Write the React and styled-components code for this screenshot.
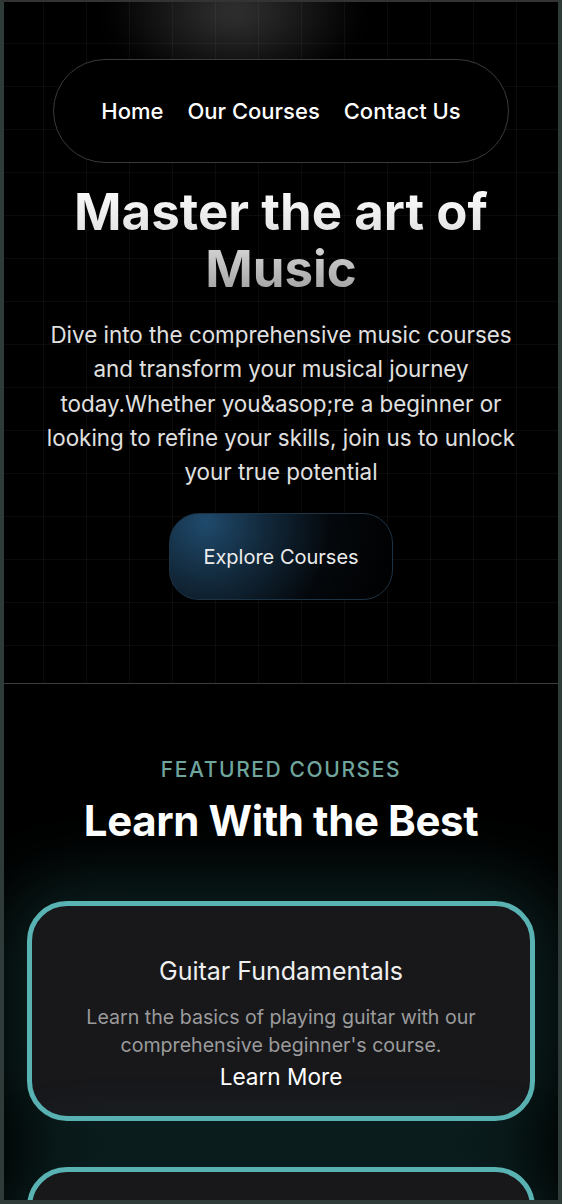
import React from "react";
import styled, { createGlobalStyle } from "styled-components";

const GlobalStyle = createGlobalStyle`
  * { box-sizing: border-box; }
  body {
    margin: 0;
    background: #2f3b38;
    font-family: Inter, "Noto Sans", sans-serif;
  }
`;

const courses = [
  {
    title: "Guitar Fundamentals",
    text: "Learn the basics of playing guitar with our comprehensive beginner's course.",
  },
  {
    title: "Piano for Beginners",
    text: "Start your piano journey with lessons designed for absolute beginners.",
  },
];

export default function App() {
  return (
    <>
      <GlobalStyle />
      <Frame>
        <Page>
          <Hero>
            <Spotlight />
            <Nav>
              <NavLink>Home</NavLink>
              <NavLink>Our Courses</NavLink>
              <NavLink>Contact Us</NavLink>
            </Nav>
            <Title>
              Master the art of
              <br />
              Music
            </Title>
            <Lead>
              Dive into the comprehensive music courses and transform your
              musical journey today.Whether you&amp;asop;re a beginner or
              looking to refine your skills, join us to unlock your true
              potential
            </Lead>
            <ExploreButton>Explore Courses</ExploreButton>
          </Hero>
          <Featured>
            <Eyebrow>FEATURED COURSES</Eyebrow>
            <SectionTitle>Learn With the Best</SectionTitle>
            <CardList>
              {courses.map((c) => (
                <Card key={c.title}>
                  <CardTitle>{c.title}</CardTitle>
                  <CardText>{c.text}</CardText>
                  <LearnMore>Learn More</LearnMore>
                </Card>
              ))}
            </CardList>
          </Featured>
        </Page>
      </Frame>
    </>
  );
}

const Frame = styled.div`
  height: 1204px;
  overflow: hidden;
  border-style: solid;
  border-color: #2f3b38;
  border-width: 2px 4px 4px 4px;
  border-top-color: #333;
`;

const Page = styled.div`
  height: 100%;
  overflow: hidden;
  background: #000;
`;

const Hero = styled.section`
  position: relative;
  display: flex;
  flex-direction: column;
  align-items: center;
  padding: 57px 0 83px;
  border-bottom: 1px solid #3c3c3c;
  background-color: #000;
  background-image: linear-gradient(rgba(255, 255, 255, 0.045) 1px, transparent 1px),
    linear-gradient(90deg, rgba(255, 255, 255, 0.045) 1px, transparent 1px);
  background-size: 43px 43px;
  background-position: -4px -2px;
`;

const Spotlight = styled.div`
  position: absolute;
  top: -70px;
  left: 100px;
  width: 260px;
  height: 160px;
  border-radius: 50%;
  background: radial-gradient(ellipse at center, rgba(255, 255, 255, 0.2), rgba(255, 255, 255, 0) 70%);
  filter: blur(10px);
  pointer-events: none;
`;

const Nav = styled.nav`
  position: relative;
  display: flex;
  justify-content: center;
  align-items: center;
  gap: 24px;
  width: 456px;
  height: 104px;
  border: 1px solid #3a3a3a;
  border-radius: 52px;
  background: #000;
`;

const NavLink = styled.a`
  color: #fff;
  font-size: 22px;
  font-weight: 500;
  cursor: pointer;
`;

const Title = styled.h1`
  margin: 20px 0 0;
  font-size: 51px;
  line-height: 57px;
  font-weight: 700;
  text-align: center;
  background: linear-gradient(180deg, #ffffff 0%, #e2e2e2 45%, #9c9c9c 100%);
  -webkit-background-clip: text;
  background-clip: text;
  color: transparent;
`;

const Lead = styled.p`
  margin: 21px 0 0;
  max-width: 482px;
  color: #e0e0e0;
  font-size: 22.4px;
  line-height: 34.3px;
  text-align: center;
`;

const ExploreButton = styled.button`
  margin-top: 24px;
  width: 224px;
  height: 87px;
  border-radius: 30px;
  border: 1px solid #1c3346;
  background: radial-gradient(circle at 16% 10%, #1f4a6c 0%, #12283a 30%, #04080c 62%, #000 100%);
  color: #ececec;
  font-family: Inter, sans-serif;
  font-size: 20px;
  cursor: pointer;
`;

const Featured = styled.section`
  display: flex;
  flex-direction: column;
  align-items: center;
  padding-top: 73px;
`;

const Eyebrow = styled.div`
  color: #6fa59d;
  font-size: 21px;
  font-weight: 500;
  letter-spacing: 1.6px;
`;

const SectionTitle = styled.h2`
  margin: 13px 0 0;
  color: #fff;
  font-size: 42px;
  font-weight: 700;
  letter-spacing: -0.4px;
`;

const CardList = styled.div`
  display: flex;
  flex-direction: column;
  gap: 46px;
  margin-top: 55px;
  width: 508px;
`;

const Card = styled.div`
  display: flex;
  flex-direction: column;
  align-items: center;
  padding: 50px 30px 26px;
  height: 220px;
  border: 5px solid #5ab3b3;
  border-radius: 40px;
  background: #18181b;
  box-shadow: 0 0 70px 20px rgba(60, 150, 150, 0.22);
  text-align: center;
`;

const CardTitle = styled.h3`
  margin: 0;
  color: #efefef;
  font-size: 25px;
  font-weight: 400;
`;

const CardText = styled.p`
  margin: 17px 0 0;
  color: #9b9b9b;
  font-size: 19.6px;
  line-height: 28px;
`;

const LearnMore = styled.a`
  margin-top: 4px;
  color: #fff;
  font-size: 22.6px;
  cursor: pointer;
`;
